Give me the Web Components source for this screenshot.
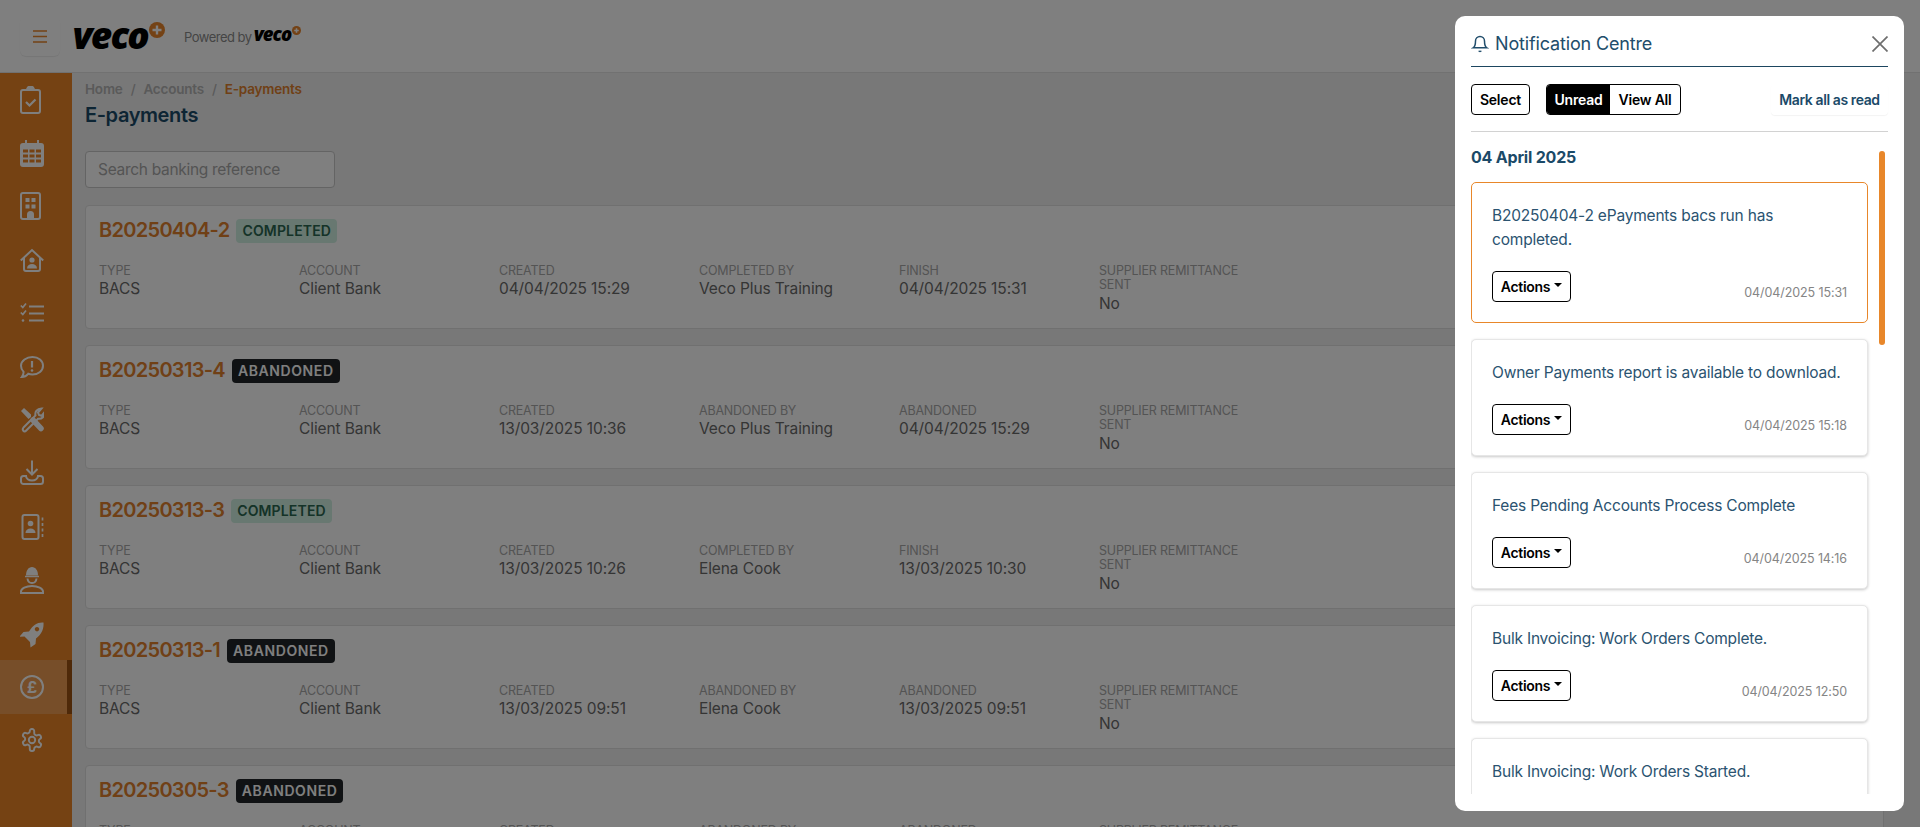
<!DOCTYPE html>
<html lang="en">
<head>
<meta charset="utf-8">
<title>E-payments</title>
<style>
  html,body{margin:0;height:100%;overflow:hidden;background:#f0f0f0}
  body{font-family:Inter,"Liberation Sans",sans-serif}
  veco-app{width:1920px;height:827px}
</style>
</head>
<body>
<veco-app>
  <veco-topbar slot="top"></veco-topbar>
  <side-nav slot="side"></side-nav>
  <epayments-page></epayments-page>
  <notification-centre slot="over"></notification-centre>
</veco-app>

<script>
const FONT = 'Inter,"Liberation Sans",sans-serif'

const appTemplate = document.createElement('template')
appTemplate.innerHTML = `
  <style>
    :host{display:grid;grid-template-columns:72px 1fr;grid-template-rows:73px 1fr;position:relative;overflow:hidden;font-family:${FONT}}
    .top{grid-column:1/3}
    .main{min-width:0;min-height:0;overflow:hidden}
    .backdrop{position:absolute;inset:0;background:rgba(0,0,0,.5)}
  </style>
  <div class="top"><slot name="top"></slot></div>
  <slot name="side"></slot>
  <div class="main"><slot></slot></div>
  <div class="backdrop"></div>
  <slot name="over"></slot>
`
class VecoApp extends HTMLElement{
  constructor(){
    super()
    this.attachShadow({mode:'open'})
    this.shadowRoot.appendChild(appTemplate.content.cloneNode(true))
  }
}
customElements.define('veco-app', VecoApp)

const topbarTemplate = document.createElement('template')
topbarTemplate.innerHTML = `
  <style>
    :host{display:flex;align-items:center;height:72px;background:#fff;border-bottom:1px solid #e2e2e2}
    .burger{width:40px;height:40px;margin-left:20px;display:flex;align-items:center;justify-content:center;border-radius:6px;box-shadow:0 1px 1px rgba(0,0,0,.08)}
    .logo{display:flex;align-items:flex-start;margin:-3px 0 0 12.500px;color:#000;font:italic 800 37px/1 "Open Sans",sans-serif;letter-spacing:-1.800px}
    .logo svg{margin:6px 0 0 1px}
    .powered{display:flex;align-items:center;margin:1px 0 0 19px;font-size:13px;letter-spacing:-.5px;color:#8a8a8a}
    .small{display:flex;align-items:flex-start;margin:-4px 0 0 2px;color:#000;font:italic 800 18.500px/1 "Open Sans",sans-serif;letter-spacing:-.9px}
    .small svg{margin:1px 0 0 .5px}
  </style>
  <div class="burger">
    <svg width="14" height="13" viewBox="0 0 14 13" fill="none" stroke="#e8842a" stroke-width="1.300"><path d="M0 1h14M0 6.500h14M0 12h14"/></svg>
  </div>
  <div class="logo">veco<svg width="16" height="16" viewBox="0 0 16 16"><circle cx="8" cy="8" r="8" fill="#e8842a"/><path d="M8 3.500v9M3.500 8h9" stroke="#fff" stroke-width="2.400"/></svg></div>
  <div class="powered">Powered by
    <span class="small">veco<svg width="9" height="9" viewBox="0 0 16 16"><circle cx="8" cy="8" r="8" fill="#e8842a"/><path d="M8 4v8M4 8h8" stroke="#fff" stroke-width="2.800"/></svg></span>
  </div>
`
class VecoTopbar extends HTMLElement{
  constructor(){
    super()
    this.attachShadow({mode:'open'})
    this.shadowRoot.appendChild(topbarTemplate.content.cloneNode(true))
  }
}
customElements.define('veco-topbar', VecoTopbar)

// calendar cells are holes in the filled body
function calendarCells(){
  let d = ''
  for(const y of [10.5,15.5,20.5]) for(const x of [3,9.5,16]) d += `M${x} ${y}h5v3h-5z`
  return d
}
const icons = {
  clipboard:`<svg width="24" height="28" viewBox="0 0 24 28" fill="none" stroke="currentColor" stroke-width="2"><rect x="1" y="4" width="19" height="23" rx="2"/><path d="M7 4a3.500 3.500 0 0 1 7 0" fill="currentColor"/><path d="M6 16l3.500 3.500 6-6" stroke-width="2.200"/></svg>`,
  calendar:`<svg width="24" height="28" viewBox="0 0 24 28"><path fill="currentColor" fill-rule="evenodd" d="M5 1h2v3h10V1h2v3h2a3 3 0 0 1 3 3v18a3 3 0 0 1-3 3H3a3 3 0 0 1-3-3V7a3 3 0 0 1 3-3h2z${calendarCells()}"/></svg>`,
  building:`<svg width="24" height="28" viewBox="0 0 24 28" fill="none" stroke="currentColor" stroke-width="2"><rect x="1" y="1" width="19" height="26" rx="2"/><g fill="currentColor" stroke="none"><rect x="5.500" y="6" width="4" height="4"/><rect x="11.500" y="6" width="4" height="4"/><rect x="5.500" y="12.500" width="4" height="4"/><rect x="11.500" y="12.500" width="4" height="4"/><path d="M7 27v-4.500a3.500 3.500 0 0 1 7 0V27z"/></g></svg>`,
  home:`<svg width="24" height="28" viewBox="0 0 24 28" fill="none" stroke="currentColor" stroke-width="2"><path d="M.8 14.500L12 4l11.200 10.500"/><path d="M4 12v11a2 2 0 0 0 2 2h12a2 2 0 0 0 2-2V12"/><circle cx="12" cy="14" r="2.600" fill="currentColor" stroke="none"/><path d="M7 22.500c0-3 2.200-4.500 5-4.500s5 1.500 5 4.500z" fill="currentColor" stroke="none"/></svg>`,
  list:`<svg width="24" height="28" viewBox="0 0 24 28" fill="none" stroke="currentColor" stroke-width="2"><path d="M9 7.500h15M9 14.500h15M9 21.500h15"/><path d="M.8 6.500l2 2 3.200-4M.8 13.500l2 2 3.200-4" stroke-width="1.700"/><circle cx="3" cy="21.500" r="1.300" fill="currentColor" stroke="none"/></svg>`,
  chat:`<svg width="24" height="28" viewBox="0 0 24 28" fill="none" stroke="currentColor" stroke-width="2"><path d="M12.500 4C18.500 4 23 7.800 23 12.800S18.500 21.500 12.500 21.500c-1.500 0-3-.2-4.300-.7C6.800 22.500 4.500 24 1.800 24c1.200-1.500 1.800-3.300 1.800-5.100C2 17.300 1 15.200 1 12.800 1 7.800 6.500 4 12.500 4z"/><path d="M12 8v6.500" stroke-width="2.200"/><circle cx="12" cy="17.500" r="1.300" fill="currentColor" stroke="none"/></svg>`,
  tools:`<svg width="24" height="28" viewBox="0 0 24 28" fill="none" stroke="currentColor" stroke-width="2"><path d="M1 5l3-3 7 6.500v2.500L8.500 13z" fill="currentColor" stroke="none"/><path d="M13 14l8 8.500" stroke-width="5.500" stroke-linecap="round"/><path d="M3.500 21.500l12-12c-.8-3.500 1.500-7 6-7l-3.500 4 1 2.500 2.500.8 3-3.500c.5 4-2.500 7-6.500 6.500l-12 12c-1.800 1.800-4.500-.8-2.500-3.300z"/></svg>`,
  download:`<svg width="24" height="28" viewBox="0 0 24 28" fill="none" stroke="currentColor" stroke-width="2"><path d="M12 1.500v13.500M6.500 10l5.500 5.500 5.500-5.500"/><path d="M6 17H3.500A2.500 2.500 0 0 0 1 19.500v3A2.500 2.500 0 0 0 3.500 25h17a2.500 2.500 0 0 0 2.500-2.500v-3a2.500 2.500 0 0 0-2.500-2.500H18a6 4.500 0 0 1-12 0z"/></svg>`,
  contacts:`<svg width="24" height="28" viewBox="0 0 24 28" fill="none" stroke="currentColor" stroke-width="2"><rect x="2.500" y="2" width="16" height="24" rx="2"/><path d="M22.500 4.500v3M22.500 10v3M22.500 15.500v3M22.500 21v3" stroke-width="1.700"/><circle cx="10.500" cy="10.500" r="2.800" fill="currentColor" stroke="none"/><path d="M5.500 20c0-3 2.200-4.500 5-4.500s5 1.500 5 4.500z" fill="currentColor" stroke="none"/></svg>`,
  worker:`<svg width="24" height="28" viewBox="0 0 24 28" fill="none" stroke="currentColor" stroke-width="2"><path d="M6 9.500C6 4.500 8.500 1 12 1s6 3.500 6 8.500z" fill="currentColor" stroke="none"/><path d="M5 10.500h14" stroke-width="1.500"/><path d="M7.500 12.500c.3 3 2 4.500 4.500 4.500s4.200-1.500 4.500-4.500"/><path d="M1 27v-1.500c0-3 5-5.500 11-5.500s11 2.500 11 5.500V27z"/></svg>`,
  rocket:`<svg width="24" height="28" viewBox="0 0 24 28"><path fill="currentColor" fill-rule="evenodd" d="M23.500 2.500c.5 6.500-2 12-7.500 16l-.5 5.500-5 3.500-.5-5.500-5.500-5.500-5 .2L3.500 12 9 11.500C13 5 17.500 2 23.500 2.500zM17 7a2.200 2.200 0 1 0 .01 0z"/></svg>`,
  pound:`<svg width="24" height="28" viewBox="0 0 24 28"><circle cx="12" cy="14" r="11" fill="none" stroke="currentColor" stroke-width="2"/><text x="12" y="20" text-anchor="middle" font-family="Inter,sans-serif" font-weight="700" font-size="16" fill="currentColor">£</text></svg>`,
  gear:`<svg width="24" height="28" viewBox="0 -2 24 28" fill="none" stroke="currentColor" stroke-width="1.900"><path d="M12.220 1h-.44a2 2 0 0 0-2 2v.18a2 2 0 0 1-1 1.730l-.43.250a2 2 0 0 1-2 0l-.15-.08a2 2 0 0 0-2.730.730l-.22.380a2 2 0 0 0 .730 2.730l.15.100a2 2 0 0 1 1 1.720v.510a2 2 0 0 1-1 1.740l-.15.090a2 2 0 0 0-.730 2.730l.22.380a2 2 0 0 0 2.730.730l.15-.08a2 2 0 0 1 2 0l.43.250a2 2 0 0 1 1 1.730V21a2 2 0 0 0 2 2h.44a2 2 0 0 0 2-2v-.18a2 2 0 0 1 1-1.730l.43-.250a2 2 0 0 1 2 0l.15.08a2 2 0 0 0 2.730-.730l.22-.390a2 2 0 0 0-.730-2.730l-.15-.08a2 2 0 0 1-1-1.740v-.5a2 2 0 0 1 1-1.740l.15-.090a2 2 0 0 0 .730-2.730l-.22-.380a2 2 0 0 0-2.730-.730l-.15.08a2 2 0 0 1-2 0l-.43-.250a2 2 0 0 1-1-1.730V3a2 2 0 0 0-2-2z"/><circle cx="12" cy="12" r="3.200"/></svg>`
}

class NavItem extends HTMLElement{
  constructor(){
    super()
    this.attachShadow({mode:'open'})
  }
  connectedCallback(){
    this.shadowRoot.innerHTML = `
      <style>
        :host{display:flex;align-items:center;height:53.400px;padding-left:20px;box-sizing:border-box;color:#fff}
        :host([active]){background:rgba(255,255,255,.2);border-right:5px solid #9c5212}
        svg{display:block}
      </style>
      ${icons[this.getAttribute('icon')]}
    `
  }
}
customElements.define('nav-item', NavItem)

class SideNav extends HTMLElement{
  constructor(){
    super()
    this.attachShadow({mode:'open'})
    const names = ['clipboard','calendar','building','home','list','chat','tools','download','contacts','worker','rocket','pound','gear']
    this.shadowRoot.innerHTML = `
      <style>
        :host{display:block;background:#ea8527;min-height:0;overflow:hidden}
      </style>
      ${names.map(n => `<nav-item icon="${n}" ${n === 'pound' ? 'active' : ''}></nav-item>`).join('')}
    `
  }
}
customElements.define('side-nav', SideNav)

const badgeTemplate = document.createElement('template')
badgeTemplate.innerHTML = `
  <style>
    :host{display:inline-block;padding:0 6px;height:24px;line-height:24px;border-radius:4px;font-size:14px;font-weight:600;letter-spacing:.15px;white-space:nowrap;background:#d1f0e2;color:#2a6650}
    :host([status="ABANDONED"]){background:#212529;color:#fff;letter-spacing:.6px}
  </style>
  <slot></slot>
`
class StatusBadge extends HTMLElement{
  constructor(){
    super()
    this.attachShadow({mode:'open'})
    this.shadowRoot.appendChild(badgeTemplate.content.cloneNode(true))
  }
}
customElements.define('status-badge', StatusBadge)

const fieldTemplate = document.createElement('template')
fieldTemplate.innerHTML = `
  <style>
    :host{display:block;min-width:0;padding-right:30px}
    .label{font-size:12.500px;line-height:14.500px;color:#a8a8a8;text-transform:uppercase;letter-spacing:-.2px}
    .value{font-size:15.500px;line-height:20px;margin-top:1px;color:#6a6a6a;letter-spacing:-.1px}
  </style>
  <div class="label"></div>
  <div class="value"><slot></slot></div>
`
class PayField extends HTMLElement{
  constructor(){
    super()
    this.attachShadow({mode:'open'})
    this.shadowRoot.appendChild(fieldTemplate.content.cloneNode(true))
    this.shadowRoot.querySelector('.label').textContent = this.getAttribute('label')
  }
}
customElements.define('pay-field', PayField)

const cardTemplate = document.createElement('template')
cardTemplate.innerHTML = `
  <style>
    :host{display:block;box-sizing:border-box;height:124px;margin-bottom:16px;padding:12.500px 13px;background:#fff;border:1px solid #e0e0e0;border-radius:4px}
    .head{display:flex;align-items:center;gap:7px;height:25px}
    h3{margin:0;font-size:20px;line-height:25px;font-weight:600;color:#e0802c;letter-spacing:-.7px}
    .grid{display:grid;grid-template-columns:repeat(6,200px);margin-top:20.500px}
  </style>
  <div class="head"><h3></h3><status-badge></status-badge></div>
  <div class="grid"><slot></slot></div>
`
class PaymentCard extends HTMLElement{
  constructor(){
    super()
    this.attachShadow({mode:'open'})
    this.shadowRoot.appendChild(cardTemplate.content.cloneNode(true))
    const st = this.getAttribute('status')
    this.shadowRoot.querySelector('h3').textContent = this.getAttribute('ref')
    const b = this.shadowRoot.querySelector('status-badge')
    b.setAttribute('status', st)
    b.textContent = st
  }
}
customElements.define('payment-card', PaymentCard)

const pageTemplate = document.createElement('template')
pageTemplate.innerHTML = `
  <style>
    :host{display:block;padding:7px 36px 0 13px;font-family:${FONT}}
    .crumbs{font-size:13.500px;line-height:18px;font-weight:600;color:#b4b4b4;display:flex;gap:8px;letter-spacing:-.2px}
    .crumbs b{font-weight:600;color:#e0802c}
    .crumbs i{font-style:normal;font-weight:500}
    h1{margin:2.500px 0 0;font-size:20px;line-height:28px;font-weight:600;color:#1b4a68;letter-spacing:-.4px}
    input{display:block;box-sizing:border-box;width:250px;height:37px;margin:22px 0 17px;padding:0 12px;background:#fff;border:1px solid #c8c8c8;border-radius:4px;font:15.500px ${FONT};letter-spacing:-.3px;outline:none}
    input::placeholder{color:#a8a8a8;opacity:1}
  </style>
  <div class="crumbs"><span>Home</span><i>/</i><span>Accounts</span><i>/</i><b>E-payments</b></div>
  <h1>E-payments</h1>
  <input placeholder="Search banking reference">
  <slot></slot>
`
const payments = [
  ['B20250404-2','COMPLETED','04/04/2025 15:29','Veco Plus Training','04/04/2025 15:31'],
  ['B20250313-4','ABANDONED','13/03/2025 10:36','Veco Plus Training','04/04/2025 15:29'],
  ['B20250313-3','COMPLETED','13/03/2025 10:26','Elena Cook','13/03/2025 10:30'],
  ['B20250313-1','ABANDONED','13/03/2025 09:51','Elena Cook','13/03/2025 09:51'],
  ['B20250305-3','ABANDONED','05/03/2025 10:12','Elena Cook','05/03/2025 10:14']
]
class EpaymentsPage extends HTMLElement{
  constructor(){
    super()
    this.attachShadow({mode:'open'})
    this.shadowRoot.appendChild(pageTemplate.content.cloneNode(true))
    this.innerHTML = payments.map(p => {
      const done = p[1] === 'COMPLETED'
      return `<payment-card ref="${p[0]}" status="${p[1]}">
        <pay-field label="Type">BACS</pay-field>
        <pay-field label="Account">Client Bank</pay-field>
        <pay-field label="Created">${p[2]}</pay-field>
        <pay-field label="${done ? 'Completed by' : 'Abandoned by'}">${p[3]}</pay-field>
        <pay-field label="${done ? 'Finish' : 'Abandoned'}">${p[4]}</pay-field>
        <pay-field label="Supplier Remittance Sent">No</pay-field>
      </payment-card>`
    }).join('')
  }
}
customElements.define('epayments-page', EpaymentsPage)

const itemTemplate = document.createElement('template')
itemTemplate.innerHTML = `
  <style>
    :host{display:block;box-sizing:border-box;margin-bottom:16.330px;padding:20px;background:#fff;border:1px solid #e6e6e6;border-radius:5px;box-shadow:0 1px 3px rgba(0,0,0,.22)}
    :host([unread]){border-color:#e8872a;box-shadow:none}
    .msg{font-size:15.500px;line-height:24px;padding-top:1px;color:#2b5370;letter-spacing:-.2px}
    .foot{display:flex;justify-content:space-between;align-items:flex-end;margin-top:19px}
    button{box-sizing:border-box;height:30.670px;width:79px;padding:0;background:#fff;border:1.300px solid #000;border-radius:4px;font:600 14px ${FONT};letter-spacing:-.3px;color:#000;display:flex;align-items:center;justify-content:center;gap:4px}
    button:after{content:"";border:4px solid transparent;border-top-color:#000;border-bottom:0;margin-top:-3px}
    .time{font-size:12.500px;line-height:19px;color:#858585;letter-spacing:-.1px}
  </style>
  <div class="msg"><slot></slot></div>
  <div class="foot"><button>Actions</button><span class="time"></span></div>
`
class NotificationItem extends HTMLElement{
  constructor(){
    super()
    this.attachShadow({mode:'open'})
    this.shadowRoot.appendChild(itemTemplate.content.cloneNode(true))
    this.shadowRoot.querySelector('.time').textContent = this.getAttribute('time')
  }
}
customElements.define('notification-item', NotificationItem)

const centreTemplate = document.createElement('template')
centreTemplate.innerHTML = `
  <style>
    :host{position:absolute;top:16px;left:1455px;width:449px;height:795px;box-sizing:border-box;display:flex;flex-direction:column;padding:0 16px 17px;background:#fff;border-radius:10px;font-family:${FONT}}
    header{display:flex;align-items:center;box-sizing:border-box;height:51.300px;padding-top:5px;border-bottom:1.300px solid #1d4660;flex:none}
    h2{margin:0 0 0 6px;font-size:18px;font-weight:400;color:#214d6b;letter-spacing:-.15px;flex:1}
    .close{width:16px;height:16px;display:block}
    .tools{display:flex;align-items:center;height:64px;border-bottom:1px solid #d2d2d2;flex:none}
    .btn{box-sizing:border-box;height:31px;display:flex;align-items:center;justify-content:center;border:1.300px solid #000;border-radius:4px;background:#fff;color:#000;font-size:14px;font-weight:600;letter-spacing:-.2px}
    .select{width:59px}
    .group{display:flex;width:135px;margin-left:16px;overflow:hidden}
    .group span{height:100%;display:flex;align-items:center;justify-content:center}
    .group .on{width:63px;background:#000;color:#fff}
    .group .off{flex:1}
    .mark{margin-left:auto;width:117px;height:31px;display:flex;align-items:center;justify-content:center;border-radius:4px;box-shadow:0 1px 1px rgba(0,0,0,.05);font-size:14px;font-weight:600;color:#1b4a68;letter-spacing:-.4px}
    .body{flex:1;min-height:0;position:relative;overflow:hidden;padding-right:20px}
    h4{margin:16px 0 15px;font-size:16px;line-height:19px;font-weight:700;color:#1b4a68;letter-spacing:-.2px}
    .thumb{position:absolute;top:19px;right:3px;width:6px;height:194px;border-radius:3px;background:#e8872a}
  </style>
  <header>
    <svg width="18" height="20" viewBox="0 0 24 24" fill="none" stroke="#214d6b" stroke-width="2"><path d="M6 8a6 6 0 0 1 12 0c0 7 3 9 3 9H3s3-2 3-9"/><path d="M10.300 21a1.940 1.940 0 0 0 3.400 0"/></svg>
    <h2>Notification Centre</h2>
    <svg class="close" viewBox="0 0 16 16" fill="none" stroke="#6e6e6e" stroke-width="1.700"><path d="M.5.500l15 15M15.500.500l-15 15"/></svg>
  </header>
  <div class="tools">
    <span class="btn select">Select</span>
    <div class="btn group"><span class="on">Unread</span><span class="off">View All</span></div>
    <span class="mark">Mark all as read</span>
  </div>
  <div class="body">
    <h4>04 April 2025</h4>
    <slot></slot>
    <div class="thumb"></div>
  </div>
`
const notifications = [
  ['B20250404-2 ePayments bacs run has completed.','04/04/2025 15:31',true],
  ['Owner Payments report is available to download.','04/04/2025 15:18'],
  ['Fees Pending Accounts Process Complete','04/04/2025 14:16'],
  ['Bulk Invoicing: Work Orders Complete.','04/04/2025 12:50'],
  ['Bulk Invoicing: Work Orders Started.','04/04/2025 12:49']
]
class NotificationCentre extends HTMLElement{
  constructor(){
    super()
    this.attachShadow({mode:'open'})
    this.shadowRoot.appendChild(centreTemplate.content.cloneNode(true))
    this.innerHTML = notifications.map(n =>
      `<notification-item time="${n[1]}" ${n[2] ? 'unread' : ''}>${n[0]}</notification-item>`
    ).join('')
  }
}
customElements.define('notification-centre', NotificationCentre)
</script>
</body>
</html>
